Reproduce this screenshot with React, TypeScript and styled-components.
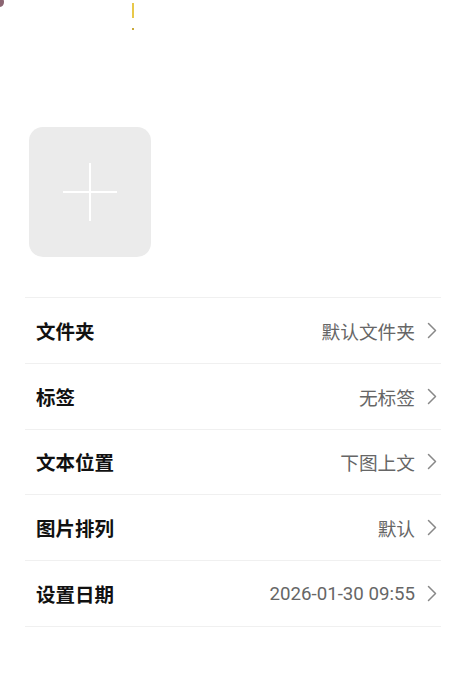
import React from "react";
import styled, { createGlobalStyle } from "styled-components";

const Global = createGlobalStyle`
  html, body { margin: 0; padding: 0; background: #fff; }
  body { font-family: "Roboto", "Noto Sans CJK SC", sans-serif; }
`;

const Page = styled.div`
  position: relative;
  width: 468px;
  height: 692px;
  background: #fff;
  overflow: hidden;
  padding-top: 127px;
  box-sizing: border-box;
`;

const CornerDot = styled.div`
  position: absolute;
  left: -4px;
  top: -3px;
  width: 8px;
  height: 10px;
  border-radius: 50%;
  background: #5a2436;
  opacity: 0.7;
`;

const Bang = styled.div`
  position: absolute;
  left: 132px;
  top: 3px;
  width: 2px;
  height: 28px;
  display: flex;
  flex-direction: column;
  align-items: center;
  gap: 10px;
`;

const BangBar = styled.span`
  width: 2px;
  height: 15px;
  background: #e8c84a;
`;

const BangDot = styled.span`
  width: 2px;
  height: 2px;
  background: #c9a93a;
`;

const AddBox = styled.div`
  margin-left: 29px;
  width: 122px;
  height: 130px;
  border-radius: 14px;
  background: #ebebeb;
  display: flex;
  align-items: center;
  justify-content: center;
`;

const List = styled.div`
  margin: 40px 0 0 25px;
  width: 416px;
  border-bottom: 1px solid #f0f0f0;
`;

const Row = styled.div`
  display: flex;
  align-items: center;
  height: 64.8px;
  border-top: 1px solid #f0f0f0;
  padding: 0 4px 0 11px;
`;

const Label = styled.div`
  flex: 1;
  font-family: "Noto Sans CJK SC", sans-serif;
  font-weight: 700;
  font-size: 19.5px;
  color: #111;
`;

const Value = styled.div`
  font-family: "Roboto", "Noto Sans CJK SC", sans-serif;
  font-size: 18.7px;
  color: #666;
  margin-right: 12px;
`;

const Chevron = () => (
  <svg width="10" height="17" viewBox="0 0 10 17" fill="none">
    <path d="M1.5 1.5 L8.5 8.5 L1.5 15.5" stroke="#888" strokeWidth="1.5" strokeLinecap="round" strokeLinejoin="round" />
  </svg>
);

const Plus = () => (
  <svg width="56" height="60" viewBox="0 0 56 60">
    <path d="M1 30 H55 M28 1 V59" stroke="#fff" strokeWidth="2" />
  </svg>
);

const rows = [
  { label: "文件夹", value: "默认文件夹" },
  { label: "标签", value: "无标签" },
  { label: "文本位置", value: "下图上文" },
  { label: "图片排列", value: "默认" },
  { label: "设置日期", value: "2026-01-30 09:55" },
];

export default function App() {
  return (
    <>
      <Global />
      <Page>
        <CornerDot />
        <Bang>
          <BangBar />
          <BangDot />
        </Bang>
        <AddBox>
          <Plus />
        </AddBox>
        <List>
          {rows.map((r) => (
            <Row key={r.label}>
              <Label>{r.label}</Label>
              <Value>{r.value}</Value>
              <Chevron />
            </Row>
          ))}
        </List>
      </Page>
    </>
  );
}
